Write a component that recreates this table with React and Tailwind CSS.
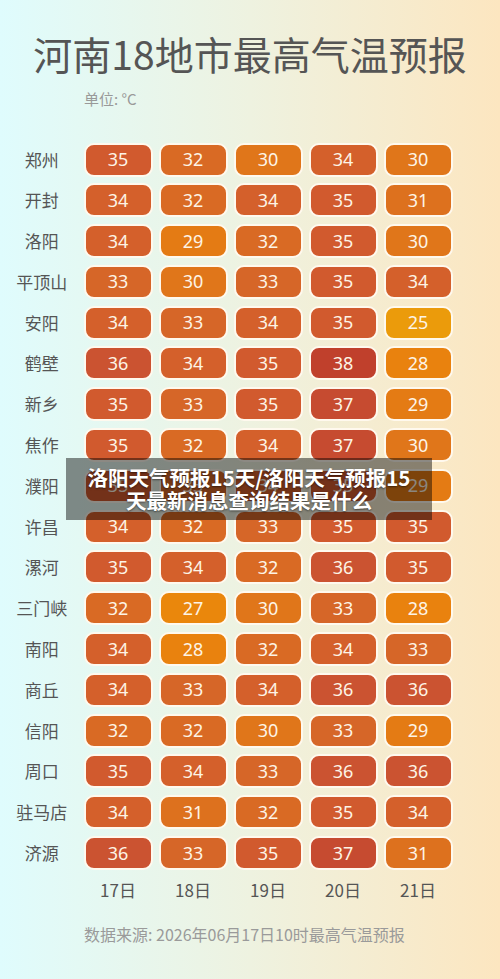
const rows = [
  ["郑州", [35, 32, 30, 34, 30]],
  ["开封", [34, 32, 34, 35, 31]],
  ["洛阳", [34, 29, 32, 35, 30]],
  ["平顶山", [33, 30, 33, 35, 34]],
  ["安阳", [34, 33, 34, 35, 25]],
  ["鹤壁", [36, 34, 35, 38, 28]],
  ["新乡", [35, 33, 35, 37, 29]],
  ["焦作", [35, 32, 34, 37, 30]],
  ["濮阳", [35, 33, 34, 35, 29]],
  ["许昌", [34, 32, 33, 35, 35]],
  ["漯河", [35, 34, 32, 36, 35]],
  ["三门峡", [32, 27, 30, 33, 28]],
  ["南阳", [34, 28, 32, 34, 33]],
  ["商丘", [34, 33, 34, 36, 36]],
  ["信阳", [32, 32, 30, 33, 29]],
  ["周口", [35, 34, 33, 36, 36]],
  ["驻马店", [34, 31, 32, 35, 34]],
  ["济源", [36, 33, 35, 37, 31]],
];

const days = ["17日", "18日", "19日", "20日", "21日"];

// colour per temperature
const tone = {
  25: "bg-[#eb9b0b]",
  26: "bg-[#eb900c]",
  27: "bg-[#ea870c]",
  28: "bg-[#e9820e]",
  29: "bg-[#e47b14]",
  30: "bg-[#e0761a]",
  31: "bg-[#dd711e]",
  32: "bg-[#d96a24]",
  33: "bg-[#d66628]",
  34: "bg-[#d4602b]",
  35: "bg-[#d15a2e]",
  36: "bg-[#cb5331]",
  37: "bg-[#c64b30]",
  38: "bg-[#c0402c]",
};

const cjk = "font-['Noto_Sans_CJK_SC','Noto_Sans',sans-serif]";

export default function App() {
  return (
    <div className={`relative w-[500px] h-[979px] overflow-hidden bg-linear-to-r from-[#dffcfd] via-[#eef2e0] to-[#fce6c0] ${cjk}`}>
      {/* Title */}
      <h1 className="pt-[25px] text-center text-[39px] leading-[56px] text-[#555555]">
        河南18地市最高气温预报
      </h1>
      <div className="pl-[84px] mt-[8px] text-[15px] leading-[20px] text-[#999999]">
        单位: °C
      </div>

      {/* Grid */}
      <div className="mt-[33.5px] flex flex-col gap-[6.8px]">
        {rows.map(([city, temps]) => (
          <div key={city} className="flex items-center">
            <div className="w-[83.5px] text-center text-[17px] leading-[24px] text-[#555555]">{city}</div>
            <div className="flex gap-[6px]">
              {temps.map((t, i) => (
                <div
                  key={i}
                  className={`w-[69px] h-[34px] rounded-[10px] border-2 border-[#fff9ee] flex items-center justify-center text-[18px] text-[#fdf4e6] font-['Noto_Sans',sans-serif] ${tone[t]}`}
                >
                  {t}
                </div>
              ))}
            </div>
          </div>
        ))}
      </div>

      {/* Days */}
      <div className="mt-[6px] pl-[83.5px] flex gap-[6px]">
        {days.map((d) => (
          <div key={d} className="w-[69px] text-center text-[17px] leading-[28px] text-[#555555]">
            {d}
          </div>
        ))}
      </div>

      <div className="mt-[18px] pl-[84px] text-[16px] leading-[24px] text-[#9a9a9a]">
        数据来源: 2026年06月17日10时最高气温预报
      </div>

      {/* Overlay caption */}
      <div className="absolute left-[66px] top-[458px] w-[366px] h-[62px] bg-black/45 flex flex-col items-center justify-center">
        <p className="text-center text-[20.5px] leading-[23px] font-bold text-white [text-shadow:0_1px_2px_rgba(0,0,0,0.5)]">
          洛阳天气预报15天/洛阳天气预报15
          <br />
          天最新消息查询结果是什么
        </p>
      </div>
    </div>
  );
}
